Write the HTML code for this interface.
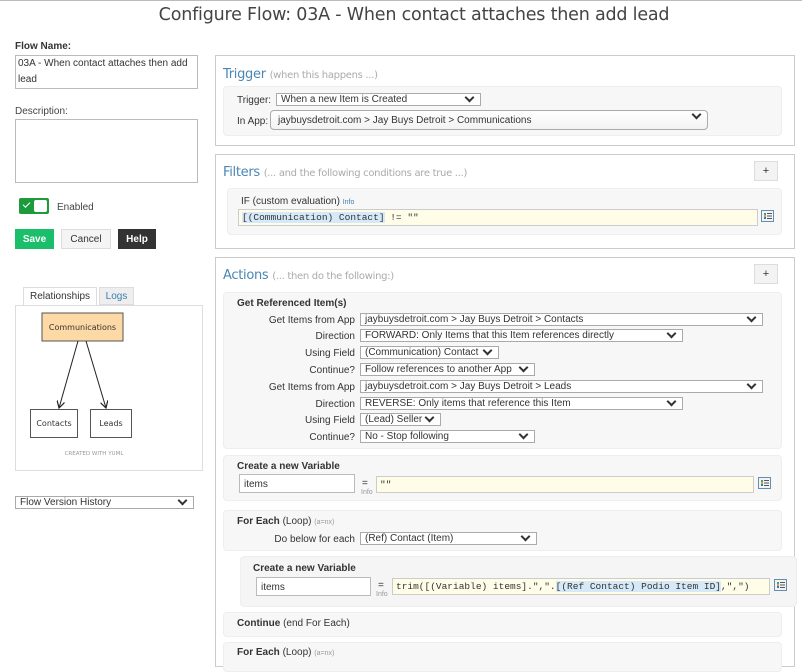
<!DOCTYPE html>
<html><head><meta charset="utf-8"><style>
*{box-sizing:border-box;margin:0;padding:0}
body{width:802px;height:657px;overflow:hidden;background:#fff;font-family:"Liberation Sans",Arial,sans-serif;font-size:10px;color:#333;position:relative}
.a{position:absolute}
.sel{position:absolute;height:13px;border:1px solid #aaa;background:#fff;font-size:10px;line-height:12px;padding-left:4px;color:#333;white-space:nowrap;overflow:hidden}
.sel:after{content:"";position:absolute;right:7px;top:0px;width:5px;height:5px;border-right:2px solid #333;border-bottom:2px solid #333;transform:rotate(45deg)}
.panel{position:absolute;border:1px solid #ccc;background:#fff}
.box{position:absolute;background:#f7f7f7;border:1px solid #eee;border-radius:4px}
.ptitle{position:absolute;font-size:13px;color:#4a86b4;font-family:"DejaVu Sans","Liberation Sans",sans-serif;letter-spacing:-0.3px}
.ptitle span{font-size:10px;color:#aaa}
.lbl{position:absolute;font-size:10px;color:#333;text-align:right;width:130px}
.b{font-weight:bold}
.plus{position:absolute;width:24px;height:20px;border:1px solid #ddd;background:#f3f3f3;text-align:center;line-height:18px;font-size:11px}
.yin{position:absolute;height:17px;background:#fffde8;border:1px solid #ccc;font-family:"Liberation Mono",monospace;font-size:9.5px;line-height:15px;padding-left:3px;color:#333;white-space:nowrap}
.ico{position:absolute;width:13px;height:12px;border:1px solid #6a8ca8;background:#eef4f8}
.ico:before{content:"";position:absolute;left:2px;top:2px;width:2px;height:6px;background:linear-gradient(#3a7 0 33%,#e93 33% 66%,#37b 66%)}
.ico:after{content:"";position:absolute;left:5px;top:2px;width:5px;height:6px;background:repeating-linear-gradient(#555 0 1px,transparent 1px 2.5px)}
.tin{position:absolute;height:19px;border:1px solid #bbb;background:#fff;font-size:10px;line-height:19px;padding-left:4px}
.info{position:absolute;font-size:7px;color:#999}
</style></head><body>
<div class="a" style="left:0;top:0;width:802px;height:1px;background:#bbb"></div>
<div class="a" style="left:0;top:5px;width:828px;text-align:center;font-family:'DejaVu Sans','Liberation Sans',sans-serif;font-size:17.5px;color:#444;letter-spacing:-0.2px">Configure Flow: 03A - When contact attaches then add lead</div>

<div class="a b" style="left:15px;top:41px;font-size:10px">Flow Name:</div>
<div class="a" style="left:15px;top:55px;width:183px;height:34px;border:1px solid #bbb;font-size:10px;line-height:16px;padding:0 2px">03A - When contact attaches then add lead</div>
<div class="a" style="left:15px;top:106px;color:#444">Description:</div>
<div class="a" style="left:15px;top:119px;width:183px;height:64px;border:1px solid #bbb"></div>
<div class="a" style="left:19px;top:198px;width:30px;height:16px;background:#1d9a3b;border-radius:2px"></div>
<div class="a" style="left:34px;top:200px;width:13px;height:12px;background:#fff;border-radius:2px"></div>
<div class="a" style="left:23px;top:202px;width:7px;height:4px;border-left:1.5px solid #fff;border-bottom:1.5px solid #fff;transform:rotate(-45deg)"></div>
<div class="a" style="left:57px;top:202px;color:#444">Enabled</div>
<div class="a b" style="left:15px;top:229px;width:39px;height:20px;background:#1bbf6b;color:#fff;text-align:center;line-height:21px">Save</div>
<div class="a" style="left:61px;top:229px;width:50px;height:20px;background:#f4f4f4;border:1px solid #ddd;text-align:center;line-height:19px;color:#333">Cancel</div>
<div class="a b" style="left:118px;top:229px;width:38px;height:20px;background:#333;color:#fff;text-align:center;line-height:21px">Help</div>

<div class="a" style="left:23px;top:287px;width:74px;height:19px;border:1px solid #ddd;border-bottom:none;background:#fff;text-align:center;line-height:17px">Relationships</div>
<div class="a" style="left:99px;top:287px;width:35px;height:18px;border:1px solid #ddd;background:#eee;text-align:center;line-height:17px;color:#3d7fb0">Logs</div>
<div class="a" style="left:15px;top:305px;width:188px;height:166px;border:1px solid #ddd"></div>
<svg class="a" style="left:0;top:0" width="210" height="480">
<defs><marker id="m" markerWidth="8" markerHeight="8" refX="7" refY="4" orient="auto"><path d="M0,0 L7,4 L0,8" fill="none" stroke="#222" stroke-width="1.2"/></marker></defs>
<rect x="42" y="313" width="81" height="28" fill="#fcd9a5" stroke="#555"/>
<rect x="30.5" y="409.5" width="47" height="28" fill="#fff" stroke="#555"/>
<rect x="90.5" y="409.5" width="41" height="28" fill="#fff" stroke="#555"/>
<line x1="78" y1="341" x2="59" y2="408" stroke="#222" marker-end="url(#m)"/>
<line x1="86" y1="341" x2="106" y2="408" stroke="#222" marker-end="url(#m)"/>
<text x="82.5" y="330" font-size="8" text-anchor="middle" fill="#333" font-family="DejaVu Sans">Communications</text>
<text x="54" y="426" font-size="8" text-anchor="middle" fill="#333" font-family="DejaVu Sans">Contacts</text>
<text x="111" y="426" font-size="8" text-anchor="middle" fill="#333" font-family="DejaVu Sans">Leads</text>
<text x="94" y="455" font-size="5.5" text-anchor="middle" fill="#999" font-family="DejaVu Sans">CREATED WITH YUML</text>
</svg>
<div class="sel" style="left:15px;top:496px;width:179px;height:13px">Flow Version History</div>

<!-- Trigger -->
<div class="panel" style="left:215px;top:55px;width:580px;height:91px"></div>
<div class="ptitle" style="left:223px;top:67px">Trigger <span>(when this happens ...)</span></div>
<div class="box" style="left:223px;top:86px;width:559px;height:50px"></div>
<div class="a" style="left:237px;top:95px">Trigger:</div>
<div class="sel" style="left:276px;top:93px;width:205px">When a new Item is Created</div>
<div class="a" style="left:237px;top:116px">In App:</div>
<div class="sel" style="left:270px;top:110px;width:438px;height:20px;border-radius:4px;line-height:19px;padding-left:7px;background:linear-gradient(#fff,#f3f3f3)">jaybuysdetroit.com &gt; Jay Buys Detroit &gt; Communications</div>

<!-- Filters -->
<div class="panel" style="left:215px;top:154px;width:580px;height:95px"></div>
<div class="ptitle" style="left:223px;top:165px">Filters <span>(... and the following conditions are true ...)</span></div>
<div class="plus" style="left:754px;top:161px">+</div>
<div class="box" style="left:227px;top:188px;width:555px;height:47px"></div>
<div class="a" style="left:241px;top:196px">IF (custom evaluation) <span style="font-size:7px;color:#3d7fb0">Info</span></div>
<div class="yin" style="left:238px;top:209px;width:520px"><span style="background:#d6e9f8">[(Communication) Contact]</span> != ""</div>
<div class="ico" style="left:761px;top:210px"></div>

<!-- Actions -->
<div class="panel" style="left:215px;top:257px;width:580px;height:410px"></div>
<div class="ptitle" style="left:223px;top:268px">Actions <span>(... then do the following:)</span></div>
<div class="plus" style="left:754px;top:264px">+</div>
<div class="box" style="left:223px;top:292px;width:559px;height:157px"></div>
<div class="a b" style="left:237px;top:298px">Get Referenced Item(s)</div>
<div class="lbl" style="left:225px;top:315px">Get Items from App</div><div class="sel" style="left:360px;top:313px;width:403px">jaybuysdetroit.com &gt; Jay Buys Detroit &gt; Contacts</div>
<div class="lbl" style="left:225px;top:331px">Direction</div><div class="sel" style="left:360px;top:329px;width:323px">FORWARD: Only Items that this Item references directly</div>
<div class="lbl" style="left:225px;top:348px">Using Field</div><div class="sel" style="left:360px;top:346px;width:139px">(Communication) Contact</div>
<div class="lbl" style="left:225px;top:365px">Continue?</div><div class="sel" style="left:360px;top:363px;width:175px">Follow references to another App</div>
<div class="lbl" style="left:225px;top:382px">Get Items from App</div><div class="sel" style="left:360px;top:380px;width:403px">jaybuysdetroit.com &gt; Jay Buys Detroit &gt; Leads</div>
<div class="lbl" style="left:225px;top:399px">Direction</div><div class="sel" style="left:360px;top:397px;width:323px">REVERSE: Only items that reference this Item</div>
<div class="lbl" style="left:225px;top:415px">Using Field</div><div class="sel" style="left:360px;top:413px;width:81px">(Lead) Seller</div>
<div class="lbl" style="left:225px;top:432px">Continue?</div><div class="sel" style="left:360px;top:430px;width:175px">No - Stop following</div>

<div class="box" style="left:223px;top:455px;width:559px;height:46px"></div>
<div class="a b" style="left:237px;top:461px">Create a new Variable</div>
<div class="tin" style="left:239px;top:474px;width:116px">items</div>
<div class="a" style="left:362px;top:478px">=</div><div class="info" style="left:361px;top:489px">Info</div>
<div class="yin" style="left:376px;top:476px;width:378px">""</div>
<div class="ico" style="left:758px;top:477px"></div>

<div class="box" style="left:223px;top:510px;width:559px;height:41px"></div>
<div class="a" style="left:237px;top:516px"><b>For Each</b> (Loop) <span style="font-size:7px;color:#999">(a=nx)</span></div>
<div class="lbl" style="left:225px;top:534px">Do below for each</div><div class="sel" style="left:360px;top:532px;width:177px">(Ref) Contact (Item)</div>

<div class="box" style="left:240px;top:556px;width:557px;height:51px;background:#f5f5f5"></div>
<div class="a b" style="left:253px;top:563px">Create a new Variable</div>
<div class="tin" style="left:256px;top:577px;width:115px">items</div>
<div class="a" style="left:378px;top:580px">=</div><div class="info" style="left:376px;top:591px">Info</div>
<div class="yin" style="left:392px;top:578px;width:378px">trim([(Variable) items].",".<span style="background:#d6e9f8">[(Ref Contact) Podio Item ID]</span>,",")</div>
<div class="ico" style="left:774px;top:579px"></div>

<div class="box" style="left:223px;top:612px;width:559px;height:25px"></div>
<div class="a" style="left:237px;top:618px"><b>Continue</b> (end For Each)</div>
<div class="box" style="left:223px;top:642px;width:559px;height:30px"></div>
<div class="a" style="left:237px;top:647px"><b>For Each</b> (Loop) <span style="font-size:7px;color:#999">(a=nx)</span></div>
</body></html>
